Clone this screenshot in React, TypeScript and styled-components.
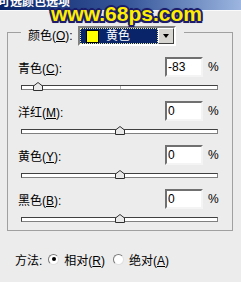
import React from "react";
import styled, { createGlobalStyle } from "styled-components";

const GlobalStyle = createGlobalStyle`
  html, body {
    margin: 0;
    padding: 0;
    background: #ececec;
  }
  body {
    font-family: "Liberation Sans", "Noto Sans CJK SC", sans-serif;
    font-size: 12px;
    color: #000;
  }
`;

const Page = styled.div`
  position: relative;
  width: 241px;
  height: 282px;
  overflow: hidden;
  background: #ececec;
`;

const TitleBar = styled.div`
  height: 10px;
  overflow: hidden;
  background: linear-gradient(to right, #0a246a 0%, #3a5a9c 55%, #9cb6e0 100%);
  border-bottom: 1px solid #fafafa;
`;

const TitleText = styled.div`
  margin: -6px 0 0 -2px;
  line-height: 16px;
  font-size: 12px;
  font-weight: bold;
  color: #fff;
`;

// site watermark laid over the title bar
const Watermark = styled.div`
  position: absolute;
  left: 51px;
  top: 3px;
  font-family: "Liberation Sans", Arial, sans-serif;
  font-weight: bold;
  font-size: 21px;
  line-height: 21px;
  color: #ffee00;
  text-shadow:
    2px 0 0 #1c1c6a, -2px 0 0 #1c1c6a, 0 2px 0 #1c1c6a, 0 -2px 0 #1c1c6a,
    1.5px 1.5px 0 #1c1c6a, -1.5px 1.5px 0 #1c1c6a, 1.5px -1.5px 0 #1c1c6a,
    -1.5px -1.5px 0 #1c1c6a, 0 0 3px #1c1c6a;
`;

const Group = styled.div`
  margin: 15px 8px 0 7px;
`;

const GroupHeader = styled.div`
  display: flex;
  align-items: flex-start;
  height: 20px;
`;

const Corner = styled.div<{ side: "left" | "right" }>`
  margin-top: 6px;
  height: 14px;
  border-top: 1px solid #a0a0a0;
  ${({ side }) =>
    side === "left"
      ? "width: 14px; border-left: 1px solid #a0a0a0; box-sizing: border-box;"
      : "flex: 1; margin-left: 8px; border-right: 1px solid #a0a0a0;"}
`;

const HeaderLabel = styled.label`
  width: 57px;
  padding-left: 7px;
  line-height: 20px;
  white-space: nowrap;
  box-sizing: border-box;
`;

const Combo = styled.div`
  display: flex;
  width: 98px;
  height: 20px;
  box-sizing: border-box;
  border: 2px solid;
  border-color: #808080 #fff #fff #808080;
  background: #fff;
`;

const ComboValue = styled.div`
  flex: 1;
  display: flex;
  align-items: center;
  gap: 7px;
  padding-left: 6px;
  background: #0a246a;
  outline: 1px dotted #e8e8a0;
  outline-offset: -1px;
  color: #fff;
  line-height: 16px;
`;

const Swatch = styled.span<{ color: string }>`
  width: 11px;
  height: 11px;
  background: ${({ color }) => color};
  border: 1px solid #000;
`;

const ComboButton = styled.div`
  width: 16px;
  box-sizing: border-box;
  display: flex;
  align-items: center;
  justify-content: center;
  background: #d8d6d0;
  border: 1px solid;
  border-color: #fff #404040 #404040 #fff;
`;

const Arrow = styled.span`
  width: 0;
  height: 0;
  border-left: 3.5px solid transparent;
  border-right: 3.5px solid transparent;
  border-top: 4px solid #000;
`;

const GroupBody = styled.div`
  display: flex;
  flex-direction: column;
  gap: 11px;
  padding: 11px 13px 8px 10px;
  border: 1px solid #a0a0a0;
  border-top: none;
`;

const Channel = styled.div`
  display: flex;
  flex-direction: column;
  gap: 5px;
`;

const ValueRow = styled.div`
  display: flex;
  align-items: center;
  height: 20px;
`;

const ChannelLabel = styled.label`
  flex: 1;
  white-space: nowrap;
  padding-top: 1px;
`;

const ValueInput = styled.div`
  width: 38px;
  height: 20px;
  box-sizing: border-box;
  padding: 1px 0 0 1px;
  background: #fff;
  border: 2px solid;
  border-color: #707070 #f4f4f4 #f4f4f4 #707070;
  line-height: 15px;
`;

const Percent = styled.span`
  width: 11px;
  margin-left: 5px;
`;

const SliderArea = styled.div`
  position: relative;
  height: 8px;
  margin: 0 1px 0 3px;
  padding-top: 3px;
  box-sizing: border-box;
`;

const Track = styled.div`
  height: 5px;
  box-sizing: border-box;
  background: #fff;
  border: 1px solid;
  border-color: #404040 #808080 #808080 #404040;
`;

const CenterTick = styled.div`
  position: absolute;
  left: 50%;
  top: 4px;
  width: 1px;
  height: 3px;
  background: #b0b0b0;
`;

const Thumb = styled.svg`
  position: absolute;
  top: 0;
  margin-left: -5px;
`;

const MethodRow = styled.div`
  display: flex;
  align-items: center;
  height: 16px;
  margin-top: 20px;
  padding-left: 15px;
`;

const MethodLabel = styled.span`
  margin-right: 6px;
`;

const Radio = styled.span<{ checked?: boolean }>`
  width: 11px;
  height: 11px;
  box-sizing: border-box;
  border-radius: 50%;
  border: 1px solid;
  border-color: #7a7a7a #e0e0e0 #e0e0e0 #7a7a7a;
  background: #fff;
  display: flex;
  align-items: center;
  justify-content: center;
  margin-right: 5px;
  &::after {
    content: "";
    width: 4px;
    height: 4px;
    border-radius: 50%;
    background: ${({ checked }) => (checked ? "#000" : "transparent")};
  }
`;

const RadioText = styled.span<{ spaced?: boolean }>`
  margin-right: ${({ spaced }) => (spaced ? "8px" : "0")};
`;

type ChannelData = { name: string; key: string; value: number };

const channels: ChannelData[] = [
  { name: "青色", key: "C", value: -83 },
  { name: "洋红", key: "M", value: 0 },
  { name: "黄色", key: "Y", value: 0 },
  { name: "黑色", key: "B", value: 0 },
];

const App: React.FC = () => {
  return (
    <Page>
      <GlobalStyle />
      <TitleBar>
        <TitleText>可选颜色选项</TitleText>
      </TitleBar>
      <Watermark>www.68ps.com</Watermark>

      <Group>
        <GroupHeader>
          <Corner side="left" />
          <HeaderLabel>
            颜色(<u>O</u>):
          </HeaderLabel>
          <Combo>
            <ComboValue>
              <Swatch color="#ffff00" />
              <span>黄色</span>
            </ComboValue>
            <ComboButton>
              <Arrow />
            </ComboButton>
          </Combo>
          <Corner side="right" />
        </GroupHeader>
        <GroupBody>
          {channels.map((c) => (
            <Channel key={c.key}>
              <ValueRow>
                <ChannelLabel>
                  {c.name}(<u>{c.key}</u>):
                </ChannelLabel>
                <ValueInput>{c.value}</ValueInput>
                <Percent>%</Percent>
              </ValueRow>
              <SliderArea>
                <Track />
                <CenterTick />
                <Thumb
                  width="10"
                  height="9"
                  viewBox="0 0 10 9"
                  style={{ left: `${((c.value + 100) / 200) * 100}%` }}
                >
                  <path
                    d="M0.5 8.5 V4 L5 0.5 L9.5 4 V8.5 Z"
                    fill="#e8e8e8"
                    stroke="#303030"
                    strokeWidth="1"
                  />
                </Thumb>
              </SliderArea>
            </Channel>
          ))}
        </GroupBody>
      </Group>

      <MethodRow>
        <MethodLabel>方法:</MethodLabel>
        <Radio checked />
        <RadioText spaced>
          相对(<u>R</u>)
        </RadioText>
        <Radio />
        <RadioText>
          绝对(<u>A</u>)
        </RadioText>
      </MethodRow>
    </Page>
  );
};

export default App;
